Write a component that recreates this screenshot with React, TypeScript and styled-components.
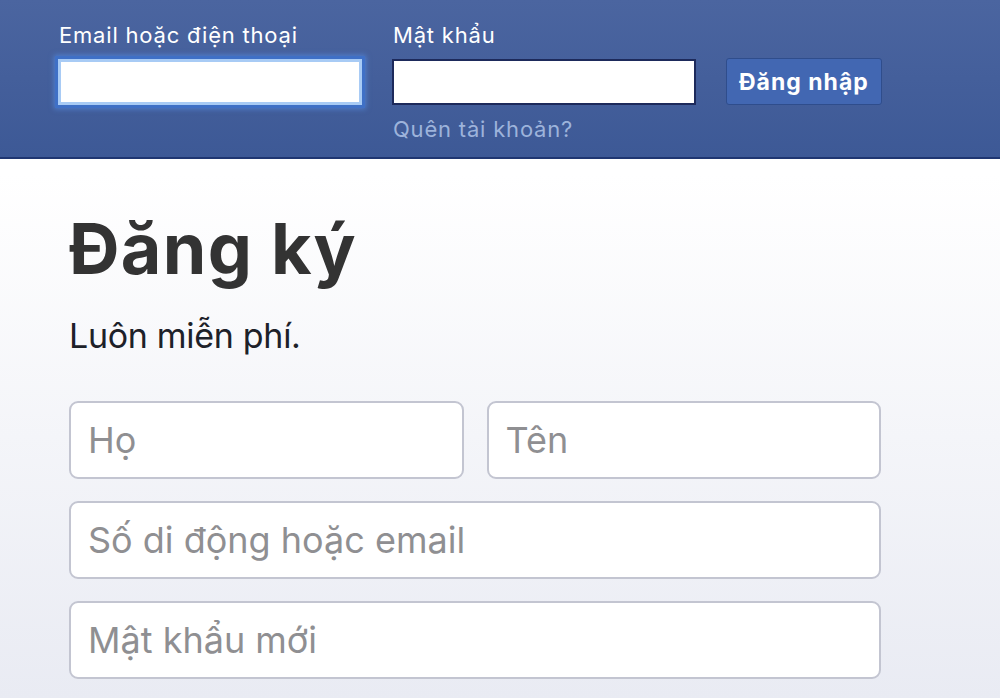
import React from 'react';
import styled, { createGlobalStyle } from 'styled-components';

const GlobalStyle = createGlobalStyle`
  html, body {
    margin: 0;
    padding: 0;
    height: 100%;
  }
  body {
    font-family: Inter, "Liberation Sans", Arial, sans-serif;
    background: linear-gradient(#ffffff 0%, #ffffff 25%, #e9ebf3 100%);
    overflow: hidden;
  }
  * { box-sizing: border-box; }
`;

const Page = styled.div`
  width: 1000px;
  height: 698px;
  display: flex;
  flex-direction: column;
`;

const TopBar = styled.header`
  height: 159px;
  flex: none;
  background: linear-gradient(#4b65a0, #3d5996);
  border-bottom: 2px solid #1f3671;
  padding: 21px 0 0 58px;
`;

const LoginRow = styled.div`
  display: flex;
  gap: 30px;
  align-items: flex-start;
`;

const Field = styled.div`
  display: flex;
  flex-direction: column;
`;

const Label = styled.label`
  color: #fff;
  font-size: 22px;
  line-height: 28px;
  letter-spacing: 0.8px;
  margin: 0 0 10px 1px;
`;

const HeadInput = styled.input<{ $focused?: boolean }>`
  width: 304px;
  height: 46px;
  border: ${p => (p.$focused ? '3px solid #a8cbf5' : '2px solid #1d2a5b')};
  box-shadow: ${p => (p.$focused ? '0 0 0 3px #3f70c6, 0 0 5px 4px rgba(86, 140, 226, 0.7)' : 'none')};
  background: #fff;
  outline: none;
  font-size: 22px;
  padding: 0 6px;
`;

const Forgot = styled.a`
  color: #9db3db;
  font-size: 22px;
  letter-spacing: 0.8px;
  margin-top: 11px;
  margin-left: 1px;
  text-decoration: none;
`;

const LoginButton = styled.button`
  margin-top: 37px;
  height: 47px;
  padding: 0 12px;
  background: #4267b2;
  border: 1px solid #2f4d8c;
  border-radius: 3px;
  color: #fff;
  font-family: inherit;
  font-weight: bold;
  font-size: 23px;
  letter-spacing: 1px;
`;

const Body = styled.main`
  padding: 45px 0 0 69px;
  flex: 1;
`;

const Title = styled.h1`
  margin: 0;
  font-size: 70px;
  font-weight: bold;
  color: #333;
  line-height: 90px;
  letter-spacing: 1.3px;
`;

const Subtitle = styled.p`
  margin: 22px 0 0;
  font-size: 34px;
  line-height: 40px;
  letter-spacing: -0.3px;
  color: #1d2129;
`;

const Form = styled.div`
  margin-top: 45px;
  width: 812px;
  display: flex;
  flex-direction: column;
  gap: 22px;
`;

const NameRow = styled.div`
  display: flex;
  gap: 23px;
`;

const TextBox = styled.input<{ $half?: boolean }>`
  flex: ${p => (p.$half ? '1' : 'none')};
  width: 100%;
  min-width: 0;
  height: 78px;
  border: 2px solid #c3c5d1;
  border-radius: 9px;
  background: #fff;
  padding: 0 17px;
  font-family: inherit;
  font-size: 36px;
  outline: none;
  &::placeholder {
    color: #8f8f92;
  }
`;

export default function App() {
  return (
    <Page>
      <GlobalStyle />
      <TopBar>
        <LoginRow>
          <Field>
            <Label>Email hoặc điện thoại</Label>
            <HeadInput $focused />
          </Field>
          <Field>
            <Label>Mật khẩu</Label>
            <HeadInput type="password" />
            <Forgot href="#">Quên tài khoản?</Forgot>
          </Field>
          <LoginButton>Đăng nhập</LoginButton>
        </LoginRow>
      </TopBar>
      <Body>
        <Title>Đăng ký</Title>
        <Subtitle>Luôn miễn phí.</Subtitle>
        <Form>
          <NameRow>
            <TextBox $half placeholder="Họ" />
            <TextBox $half placeholder="Tên" />
          </NameRow>
          <TextBox placeholder="Số di động hoặc email" />
          <TextBox placeholder="Mật khẩu mới" type="password" />
        </Form>
      </Body>
    </Page>
  );
}
